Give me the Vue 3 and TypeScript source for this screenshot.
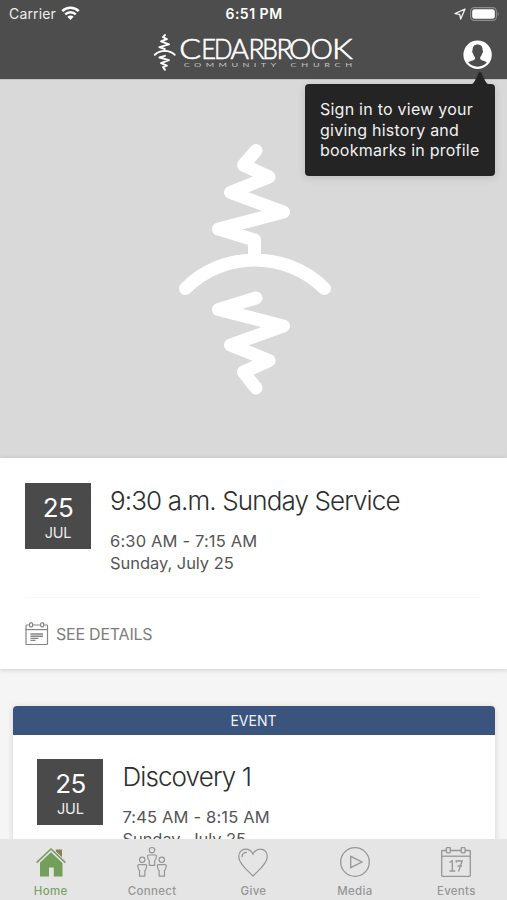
<script setup lang="ts">
interface EventInfo {
  day: string
  month: string
  title: string
  time: string
  date: string
}

interface Tab {
  id: string
  label: string
  active: boolean
}

interface Letter {
  char: string
  x: number
  width: number
}

const wordmark: Letter[] = [
  { char: 'C', x: 26.2, width: 21.8 },
  { char: 'E', x: 48.2, width: 14.8 },
  { char: 'D', x: 61, width: 18.4 },
  { char: 'A', x: 77.6, width: 18.4 },
  { char: 'R', x: 95.4, width: 16 },
  { char: 'B', x: 109.3, width: 15.6 },
  { char: 'R', x: 123.4, width: 16 },
  { char: 'O', x: 136, width: 22.4 },
  { char: 'O', x: 157.4, width: 22.4 },
  { char: 'K', x: 179, width: 20.6 },
]

const service: EventInfo = {
  day: '25',
  month: 'JUL',
  title: '9:30 a.m. Sunday Service',
  time: '6:30 AM - 7:15 AM',
  date: 'Sunday, July 25',
}

const discovery: EventInfo = {
  day: '25',
  month: 'JUL',
  title: 'Discovery 1',
  time: '7:45 AM - 8:15 AM',
  date: 'Sunday, July 25',
}

const tooltipLines: string[] = ['Sign in to view your', 'giving history and', 'bookmarks in profile']

const tabs: Tab[] = [
  { id: 'home', label: 'Home', active: true },
  { id: 'connect', label: 'Connect', active: false },
  { id: 'give', label: 'Give', active: false },
  { id: 'media', label: 'Media', active: false },
  { id: 'events', label: 'Events', active: false },
]
</script>

<template>
  <div class="screen">
    <header class="header">
      <div class="status">
        <div class="carrier">
          <span>Carrier</span>
          <svg width="19" height="15" viewBox="0 0 19 15">
            <path d="M1.3 5.2 A11.6 11.6 0 0 1 17.7 5.2" fill="none" stroke="#fff" stroke-width="2.5" />
            <path d="M4.2 8.4 A7.5 7.5 0 0 1 14.8 8.4" fill="none" stroke="#fff" stroke-width="2.4" />
            <path d="M6.4 10.7 A4.4 4.4 0 0 1 12.6 10.7 L9.5 14 Z" fill="#fff" />
          </svg>
        </div>
        <div class="clock">6:51 PM</div>
        <div class="indicators">
          <svg width="12" height="12" viewBox="0 0 12 12">
            <path d="M11 1 L1 5.6 L5.7 6.3 L6.7 11 Z" fill="none" stroke="#f4f4f4" stroke-width="1.3" stroke-linejoin="round" />
          </svg>
          <svg width="30" height="14" viewBox="0 0 30 14">
            <rect x=".6" y=".6" width="25.8" height="12.8" rx="3.8" fill="none" stroke="#8d8d8d" stroke-width="1.1" />
            <rect x="2.2" y="2.2" width="22.6" height="9.6" rx="2.4" fill="#fff" />
            <path d="M27.8 4.7 Q29.6 7 27.8 9.3 Z" fill="#a5a5a5" />
          </svg>
        </div>
      </div>
      <div class="brand-row">
        <svg class="brand" width="202" height="40" viewBox="0 0 202 40">
          <g fill="none" stroke="#fff" stroke-width="1.9" stroke-linecap="round" stroke-linejoin="round">
            <path d="M12 3 L10 5.2 L13.9 7 L8 9.4 L16 12.4 L6.400 15.200 L11.700 17 V19" />
            <path d="M1.800 22.800 C7.200 17.600 16.200 17.600 21.700 22.800" />
            <path d="M12 23.800 L6.400 25.500 L16 28.100 L8 31.200 L13.900 33.600 L10 35.200 L12 37.800" />
          </g>
          <text y="27.300" font-size="27.200" class="brand-name"><tspan v-for="(l, i) in wordmark" :key="i" :x="l.x" :textLength="l.width" lengthAdjust="spacingAndGlyphs">{{ l.char }}</tspan></text>
          <g transform="scale(1.4 1)">
            <text x="22" y="35" font-size="6.500" textLength="66" lengthAdjust="spacing" class="brand-sub">COMMUNITY</text>
            <text x="98.300" y="35" font-size="6.500" textLength="44" lengthAdjust="spacing" class="brand-sub">CHURCH</text>
          </g>
        </svg>
        <div class="profile">
          <svg width="30" height="30" viewBox="0 0 30 30">
            <circle cx="14.600" cy="14.700" r="14.200" fill="#fff" />
            <path transform="translate(-.4 -.3)" d="M15 4.8 C18.6 4.8 20.2 7.2 20 10.6 C20.7 11 20.5 13 19.6 13.6 C19.2 15.6 18.3 16.8 17.6 17.6 V19.2 C18.7 21 22.5 21 24.3 22.7 A12.3 12.3 0 0 1 5.7 22.7 C7.5 21 11.3 21 12.4 19.2 V17.6 C11.7 16.8 10.8 15.6 10.4 13.6 C9.5 13 9.3 11 10 10.6 C9.8 7.2 11.4 4.8 15 4.8 Z" fill="#4d4d4d" />
          </svg>
          <div class="tooltip">
            <svg class="pointer" width="18" height="14" viewBox="0 0 18 14"><path d="M0 14 Q2.4 12.4 3.6 10.2 L7.6 2 Q9 -.6 10.4 2 L14.4 10.2 Q15.6 12.4 18 14 Z" fill="#242424" /></svg>
            <div v-for="line in tooltipLines" :key="line">{{ line }}</div>
          </div>
        </div>
      </div>
    </header>

    <main class="content">
      <div class="hero">
        <svg width="154" height="254" viewBox="0 0 154 254">
          <g fill="none" stroke="#fff" stroke-width="13" stroke-linecap="round" stroke-linejoin="round">
            <path d="M78 8.5 L65.500 23 L91 35 L52.500 50.5 L105.500 70 L40.5 87 L76.500 98 V117" />
            <path d="M7.5 146.5 C45 108.5 108.500 108.500 146.500 146.500" />
            <path d="M78 156 L40.500 167.500 L105.500 184 L52.500 203 L91 218.500 L65.500 230 L78 246" />
          </g>
        </svg>
      </div>

      <section class="service">
        <div class="event-row">
          <div class="badge">
            <span class="day">{{ service.day }}</span>
            <span class="month">{{ service.month }}</span>
          </div>
          <div class="info">
            <h2 class="title">{{ service.title }}</h2>
            <p class="meta">{{ service.time }}</p>
            <p class="meta date">{{ service.date }}</p>
          </div>
        </div>
        <div class="details">
          <svg width="24" height="24" viewBox="0 0 24 24" fill="none" stroke="#858585" stroke-width="1.2">
            <rect x="1" y="3" width="21.500" height="19.500" rx=".8" />
            <path d="M1 7.600 H22.500" />
            <rect x="4.600" y=".8" width="3" height="4" rx="1" fill="#fff" />
            <rect x="15.700" y=".8" width="3" height="4" rx="1" fill="#fff" />
            <path d="M5.500 12 H18 M5.500 14.200 H18 M5.500 16.400 H13.500 M5.500 18.400 H10.500" stroke-width="1.400" />
          </svg>
          <span>SEE DETAILS</span>
        </div>
      </section>

      <section class="card">
        <div class="card-head"><span>EVENT</span></div>
        <div class="event-row">
          <div class="badge">
            <span class="day">{{ discovery.day }}</span>
            <span class="month">{{ discovery.month }}</span>
          </div>
          <div class="info">
            <h2 class="title">{{ discovery.title }}</h2>
            <p class="meta">{{ discovery.time }}</p>
            <p class="meta date">{{ discovery.date }}</p>
          </div>
        </div>
      </section>
    </main>

    <nav class="tabs">
      <div v-for="tab in tabs" :key="tab.id" class="tab" :class="[tab.id, { active: tab.active }]">
        <svg v-if="tab.id === 'home'" width="32" height="32" viewBox="0 0 32 32">
          <path d="M20.800 3.500 H27 V12 L20.800 6 Z" fill="#8a8158" />
          <path d="M16 5.600 L27.500 16 V30.400 H18.800 V21.500 H14 V30.400 H5 V16 Z" fill="#729f5a" />
          <path d="M1.600 17 L16 3.500 L30.400 17" fill="none" stroke="#e5e5e5" stroke-width="3.800" />
          <path d="M1.600 16.600 L16 3 L30.400 16.600" fill="none" stroke="#769b5e" stroke-width="1.500" />
        </svg>
        <svg v-else-if="tab.id === 'connect'" width="32" height="32" viewBox="0 0 32 32" fill="none" stroke="#969696" stroke-width="1.200" stroke-linejoin="round">
          <circle cx="16" cy="4.200" r="2.700" />
          <path d="M12.700 9 H19.300 Q20.600 9 20.400 10.500 Q20.200 13.500 18.700 14.800 V19.300 H13.300 V14.800 Q11.800 13.500 11.600 10.500 Q11.400 9 12.700 9 Z" />
          <circle cx="6.200" cy="13.800" r="2.700" />
          <path d="M2.900 18.700 H9.500 Q10.800 18.700 10.600 20.200 Q10.400 23 8.900 24.500 V30.200 H3.500 V24.500 Q2 23 1.800 20.200 Q1.600 18.700 2.900 18.700 Z" />
          <circle cx="25.800" cy="13.800" r="2.700" />
          <path d="M22.500 18.700 H29.100 Q30.400 18.700 30.200 20.200 Q30 23 28.500 24.500 V30.200 H23.100 V24.500 Q21.600 23 21.400 20.200 Q21.200 18.700 22.500 18.700 Z" />
        </svg>
        <svg v-else-if="tab.id === 'give'" width="32" height="32" viewBox="0 0 32 32" fill="none" stroke="#969696" stroke-width="1.250">
          <path d="M16 30 C13 26.500 1.700 18.500 1.700 10.500 C1.700 6 4.900 3 8.700 3 C12 3 14.600 5 16 8 C17.400 5 20 3 23.500 3 C27.300 3 30.300 6 30.300 10.500 C30.300 18.500 19 26.500 16 30 Z" />
          <path d="M5 11.300 C5 8.300 6.700 6.400 9.800 6.400" />
        </svg>
        <svg v-else-if="tab.id === 'media'" width="32" height="32" viewBox="0 0 32 32" fill="none" stroke="#969696" stroke-width="1.300">
          <circle cx="16" cy="16" r="14.300" />
          <path d="M11.700 10.300 V21.700 L23 16 Z" />
        </svg>
        <svg v-else width="32" height="32" viewBox="0 0 32 32" fill="none" stroke="#969696" stroke-width="1.300">
          <rect x="1.700" y="4.500" width="28.600" height="25.800" rx=".5" />
          <path d="M1.700 10.200 H30.300" />
          <rect x="6.400" y="1.600" width="3.900" height="5.300" rx=".8" fill="#e5e5e5" />
          <rect x="21.200" y="1.600" width="3.900" height="5.300" rx=".8" fill="#e5e5e5" />
          <path d="M9.500 16.400 L12.300 14.800 V25 M9.500 25 H15.200 M16.200 16.800 V15 H22.200 L18.500 25.500 M17.500 20 H22" />
        </svg>
        <span class="tab-label">{{ tab.label }}</span>
      </div>
    </nav>
  </div>
</template>

<style>
body {
  margin: 0;
  overflow: hidden;
}
</style>

<style scoped>
.screen {
  display: flex;
  flex-direction: column;
  width: 507px;
  height: 900px;
  overflow: hidden;
  background: #f5f5f5;
  font-family: Inter, "Liberation Sans", sans-serif;
}

.header {
  flex: none;
  height: 79px;
  background: #4d4d4d;
  color: #fff;
}

.status {
  display: grid;
  grid-template-columns: 1fr auto 1fr;
  align-items: center;
  height: 27px;
  padding: 0 6px 0 9px;
}

.carrier {
  display: flex;
  align-items: center;
  gap: 5px;
  font-size: 14px;
  letter-spacing: 0.15px;
  color: #ededed;
}

.clock {
  font-size: 14px;
  font-weight: 600;
  letter-spacing: 0.5px;
  margin-right: 2px;
}

.indicators {
  display: flex;
  align-items: center;
  justify-content: flex-end;
  gap: 4px;
  margin-right: 1px;
}

.brand-row {
  display: flex;
  align-items: flex-start;
  justify-content: space-between;
  padding: 5px 14px 0 153px;
}

.brand {
  overflow: visible;
}

.brand-name {
  font-family: Lato, sans-serif;
  font-weight: 300;
  fill: #fff;
  stroke: #fff;
  stroke-width: 0.65;
}

.brand-sub {
  font-family: Lato, sans-serif;
  fill: #c4c4c4;
}

.profile {
  position: relative;
  width: 30px;
  height: 30px;
  margin-top: 8px;
}

.tooltip {
  position: absolute;
  z-index: 2;
  top: 44px;
  right: -2px;
  box-sizing: border-box;
  width: 190px;
  height: 92px;
  padding: 15px 0 0 15px;
  border-radius: 4px;
  background: #242424;
  box-shadow: 0 2px 8px rgba(0, 0, 0, 0.13);
  color: #f1f1f1;
  font-size: 16px;
  line-height: 20.6px;
  letter-spacing: 0.24px;
  white-space: nowrap;
}

.pointer {
  position: absolute;
  top: -13px;
  right: 6px;
}

.content {
  flex: 1;
  min-height: 0;
  overflow: hidden;
}

.hero {
  display: flex;
  justify-content: center;
  box-sizing: border-box;
  height: 379px;
  padding: 62px 0 0 3px;
  border-top: 1px solid #c4c4c4;
  background: #d9d9d9;
}

.service {
  display: flex;
  flex-direction: column;
  box-sizing: border-box;
  height: 211px;
  padding: 25px 25px 0;
  background: #fff;
  box-shadow: 0 1px 5px rgba(0, 0, 0, 0.16);
}

.event-row {
  display: flex;
  gap: 19px;
}

.badge {
  display: flex;
  flex-direction: column;
  align-items: center;
  flex: none;
  box-sizing: border-box;
  width: 66px;
  height: 66px;
  padding-top: 9px;
  background: #4a4a4a;
  color: #fff;
}

.day {
  font-size: 26px;
  line-height: 31px;
  letter-spacing: -0.6px;
}

.month {
  font-size: 14.5px;
  line-height: 19px;
  letter-spacing: -0.2px;
  color: #ededed;
}

.title {
  margin: 0;
  font-size: 26px;
  font-weight: 300;
  line-height: 36px;
  letter-spacing: -0.88px;
  color: #2e2e2e;
  white-space: nowrap;
}

.meta {
  margin: 0;
  padding-top: 10.5px;
  font-size: 16.5px;
  line-height: 22px;
  letter-spacing: 0.16px;
  color: #555;
  white-space: nowrap;
}

.meta.date {
  padding-top: 0;
  letter-spacing: -0.05px;
}

.details {
  display: flex;
  align-items: center;
  gap: 7px;
  height: 71px;
  margin-top: 23.5px;
  border-top: 1px solid #f8f8f8;
  font-size: 16px;
  letter-spacing: -0.22px;
  color: #7d7d7d;
}

.card {
  width: 482px;
  height: 190px;
  margin: 37px 0 0 13px;
  border-radius: 4px;
  background: #fff;
  box-shadow: 0 1px 6px rgba(0, 0, 0, 0.14);
}

.card-head {
  display: flex;
  align-items: center;
  justify-content: center;
  height: 29px;
  padding-right: 1px;
  border-radius: 4px 4px 0 0;
  background: #3b547d;
  color: #eef2f8;
  font-size: 14px;
}

.card .event-row {
  padding: 24.3px 0 0 24.4px;
}

.tabs {
  display: grid;
  grid-template-columns: repeat(5, 1fr);
  flex: none;
  box-sizing: border-box;
  height: 61px;
  padding-top: 7px;
  background: #e5e5e5;
}

.tab {
  display: flex;
  flex-direction: column;
  align-items: center;
  color: #969696;
}

.tab svg {
  display: block;
}

.tab-label {
  margin-top: 6px;
  font-size: 11.5px;
  font-weight: 500;
  line-height: 15px;
  letter-spacing: 0.3px;
}

.tab.active {
  color: #7f9f6b;
}
</style>
